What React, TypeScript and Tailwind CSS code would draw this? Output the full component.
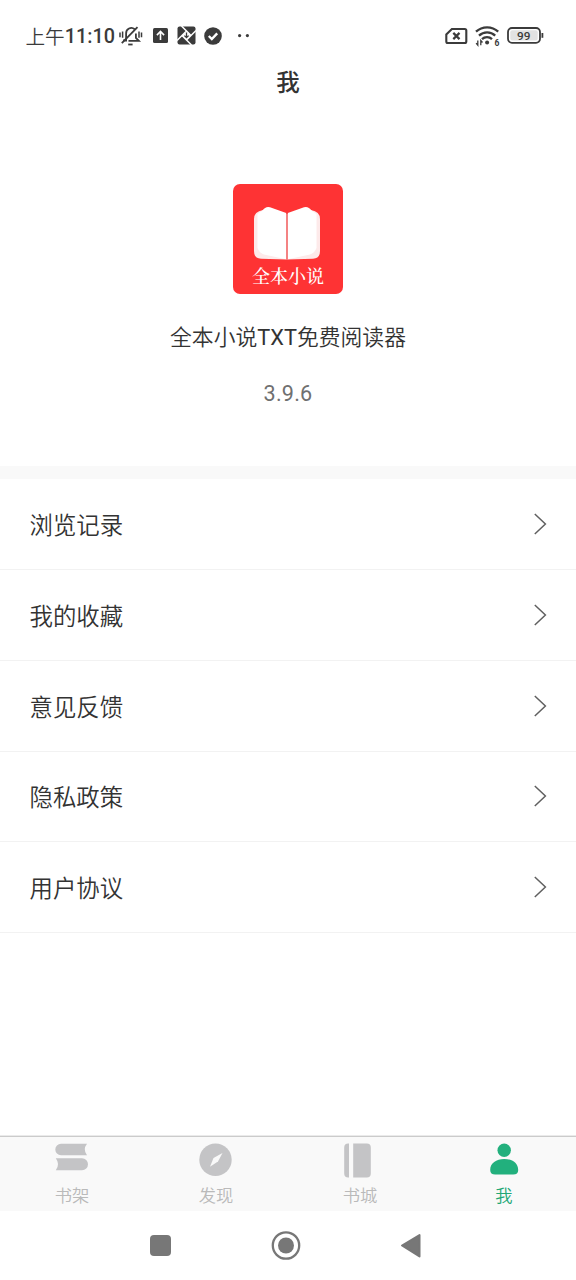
import type { ReactNode } from 'react';

const records = ['浏览记录', '我的收藏', '意见反馈', '隐私政策', '用户协议'];

function StatusBar() {
  return (
    <header className="flex h-[56px] items-start justify-between pl-[25.5px] pr-[32px] pt-[23.5px] text-[#3b3b3b]">
      <div className="flex h-[24px] items-center">
        <span className="flex w-[92.5px] items-center whitespace-nowrap leading-[24px]">
          <span className="text-[19.6px] font-[350]">上午</span>
          <span className="pt-[2px] font-[Roboto] text-[19.8px] font-medium">11:10</span>
        </span>
        <svg className="h-6 w-[26px]" viewBox="0 0 26 24" fill="none" stroke="currentColor" strokeWidth="1.8">
          <path d="M5 16.5h3.1V9.5a5.2 5.2 0 0 1 8.6-4.2M17.9 9.5v4.4l3 3H10.5" />
          <path d="M3.8 19.2 19.5 3.2" />
          <path d="M10.2 20.5h4.4" />
          <path d="M2 8.5v4.8M4.6 7.5v6.2M21 7.5v6.2M23.5 8.5v4.8" strokeWidth="1.5" />
        </svg>
        <svg className="ml-[8.5px] h-[15px] w-[15px]" viewBox="0 0 15 15">
          <rect width="15" height="15" rx="1.5" fill="currentColor" />
          <path d="M7.5 12V3.6M3.9 7.1l3.6-3.6 3.6 3.6" fill="none" stroke="#fff" strokeWidth="1.6" />
        </svg>
        <svg className="ml-[9px] h-[19px] w-[19px]" viewBox="0 0 19 19">
          <rect x=".5" y=".5" width="18" height="18" rx="2" fill="currentColor" />
          <path d="M4.5 0 14 9.5M0 14.5 9.5 5M5 9.5l9.5 9.5M9.5 14 19 4.5" fill="none" stroke="#fff" strokeWidth="1.5" />
          <path d="m9.5 5 4.5 4.5L9.5 14 5 9.5Z" fill="#fff" />
          <path d="M9.5 6.5v5M7.4 9.6l2.1 2.1 2.1-2.1" fill="none" stroke="currentColor" strokeWidth="1.3" />
        </svg>
        <svg className="ml-[8px] h-[18px] w-[18px]" viewBox="0 0 18 18">
          <circle cx="9" cy="9" r="8.8" fill="currentColor" />
          <path d="m4.8 9 3 3 5.4-5.6" fill="none" stroke="#fff" strokeWidth="2.4" />
        </svg>
        <svg className="ml-[14px] h-[6px] w-[16px]" viewBox="0 0 16 6" fill="currentColor">
          <circle cx="3.6" cy="2.6" r="1.6" />
          <circle cx="11.4" cy="2.6" r="1.6" />
        </svg>
      </div>
      <div className="flex h-[24px] items-center">
        <svg className="h-[24px] w-[23px]" viewBox="0 0 23 24" fill="none" stroke="currentColor" strokeWidth="2.1">
          <path d="M6.9 5H19.8a1.5 1.5 0 0 1 1.5 1.5v11A1.5 1.5 0 0 1 19.8 19H2.8a1.5 1.5 0 0 1-1.5-1.5V10.4Z" />
          <path d="m8.3 8.9 6.2 6.2M14.5 8.9l-6.2 6.2" strokeWidth="2.2" />
        </svg>
        <svg className="ml-[7px] h-[24px] w-[26px]" viewBox="0 0 26 24" fill="none" stroke="currentColor" strokeWidth="2.3">
          <path d="M1 7.7a16.3 16.3 0 0 1 22.2 0M4 11.6a11.8 11.8 0 0 1 16.2 0M7 15.200a7.200 7.200 0 0 1 10 0" />
          <circle cx="12.1" cy="18.4" r="2" fill="currentColor" stroke="none" />
          <path d="M2.8 16.5v4.7l-1.700-2M5.800 21.200v-4.700l1.700 2" strokeWidth="1.3" />
          <text x="19.6" y="21.6" className="font-[Roboto] text-[8.5px] font-bold" fill="currentColor" stroke="none">6</text>
        </svg>
        <svg className="ml-[6px] h-[24px] w-[37px]" viewBox="0 0 37 24">
          <rect x="1" y="4" width="32" height="14.8" rx="4" fill="#fff" stroke="currentColor" strokeWidth="1.8" />
          <rect x="3.3" y="6.2" width="27.4" height="10.4" rx="2" fill="#e2e2e2" />
          <path d="M35.4 9v4.8" stroke="currentColor" strokeWidth="1.8" />
          <text x="16.8" y="15.6" textAnchor="middle" className="font-[Roboto] text-[11.8px] font-medium" fill="currentColor">99</text>
        </svg>
      </div>
    </header>
  );
}

function BookLogo() {
  return (
    <div className="flex h-[110px] w-[110px] flex-col items-center rounded-[7px] bg-[#fe3334] pt-[22px]">
      <svg className="mr-[2px] h-[54px] w-[68px]" viewBox="0 0 68 54">
        <path d="M10 4Q1 5.5 1 13v32q0 7.5 7 7.700L34 53.500l26-.8q7-.2 7-7.700V13q0-7.500-9-9L34 8Z" fill="#fdeaea" />
        <path d="M33.200 7 17 1.200Q12.500 0 9.500 4.500L4.500 8v34q2 5 6.500 6.500L33.200 53.300Z" fill="#fff" />
        <path d="M34.800 7 51 1.200Q55.500 0 58.500 4.500L63.500 8v34q-2 5-6.500 6.500L34.800 53.300Z" fill="#fff" />
        <path d="M34 6.500v47" stroke="#f0494a" strokeWidth="1.300" />
      </svg>
      <span className="mt-[3px] whitespace-nowrap font-['Noto_Serif_CJK_SC','Noto_Sans_CJK_SC',serif] text-[18px] font-medium leading-[24px] text-white">全本小说</span>
    </div>
  );
}

function Tab({ label, active = false, children }: { label: string; active?: boolean; children: ReactNode }) {
  return (
    <button className={`flex w-1/4 flex-col items-center pt-[5px] ${active ? 'text-[#22b07d]' : 'text-[#c4c4c6]'}`}>
      <svg className="h-[36px] w-[36px]" viewBox="0 0 36 36" fill="currentColor">{children}</svg>
      <span className={`mt-[4px] text-[17.3px] font-[350] leading-[26px] ${active ? 'text-[#22a775]' : 'text-[#bababa]'}`}>{label}</span>
    </button>
  );
}

export default function App() {
  return (
    <div className="flex h-[1280px] w-[576px] flex-col overflow-hidden bg-white font-['Noto_Sans_CJK_SC',sans-serif] text-[#333]">
      <StatusBar />
      <h1 className="h-[52px] text-center text-[23.5px] font-medium leading-[50px]">我</h1>
      <section className="flex h-[358px] flex-col items-center pt-[76px]">
        <BookLogo />
        <h2 className="mt-[26px] whitespace-nowrap text-[21.8px] font-[350] leading-[32px]">
          全本小说<span className="font-[Roboto] font-normal">TXT</span>免费阅读器
        </h2>
        <p className="mt-[25px] font-[Roboto] text-[21.6px] leading-[30px] tracking-[0.2px] text-[#707070]">3.9.6</p>
      </section>
      <div className="h-[13px] bg-[#f9f9f9]" />
      <ul className="pt-[0.2px]">
        {records.map((name) => (
          <li key={name} className="flex h-[90.8px] items-center justify-between border-b border-[#f2f2f2] px-[29.5px]">
            <span className="text-[23.4px] font-[350] leading-[34px]">{name}</span>
            <svg className="h-[22px] w-[13px]" viewBox="0 0 13 22" fill="none" stroke="#606060" strokeWidth="1.5">
              <path d="m.8 1 10.6 10L.8 21" />
            </svg>
          </li>
        ))}
      </ul>
      <div className="mt-auto h-px shrink-0 bg-[#eaeaea]" />
      <nav className="flex h-[75px] shrink-0 border-t border-[#cbcbcb] bg-[#f9f9f9]">
        <Tab label="书架">
          <path d="M7 1.8h26q-4.5 5.7 0 11.4H7A5.7 5.7 0 0 1 7 1.8Z" />
          <path d="M1.8 16.2h26.2a6 6 0 0 1 0 12H1.8q4.5-6 0-12Z" />
        </Tab>
        <Tab label="发现">
          <circle cx="17.5" cy="17.8" r="16.2" />
          <path d="M24.5 11 15.500 16 12 24.800l8-5.300Z" fill="#f9f9f9" />
        </Tab>
        <Tab label="书城">
          <path d="M6.2 1.6H7v34h-.8a4 4 0 0 1-4-4v-26a4 4 0 0 1 4-4ZM11.2 1.6h13.6a4 4 0 0 1 4 4v26a4 4 0 0 1-4 4H11.2Z" />
        </Tab>
        <Tab label="我" active>
          <circle cx="18.2" cy="8.2" r="6.7" />
          <path d="M4.2 28c0-7 6-11 14-11s14 4 14 11q0 4.5-5 4.5h-18q-5 0-5-4.5Z" />
        </Tab>
      </nav>
      <footer className="flex h-[69px] shrink-0 items-center justify-between pl-[149.5px] pr-[154px] text-[#777]">
        <div className="h-[21px] w-[21px] rounded-[4px] bg-current" />
        <svg className="ml-[2px] h-[30px] w-[30px]" viewBox="0 0 30 30">
          <circle cx="15" cy="14.5" r="13.2" fill="none" stroke="currentColor" strokeWidth="2.3" />
          <circle cx="15" cy="14.5" r="8" fill="currentColor" />
        </svg>
        <svg className="h-[26px] w-[22px]" viewBox="0 0 22 26" fill="currentColor" stroke="currentColor" strokeWidth="2" strokeLinejoin="round">
          <path d="M2 12.5 19.5 2v21.500Z" />
        </svg>
      </footer>
    </div>
  );
}
